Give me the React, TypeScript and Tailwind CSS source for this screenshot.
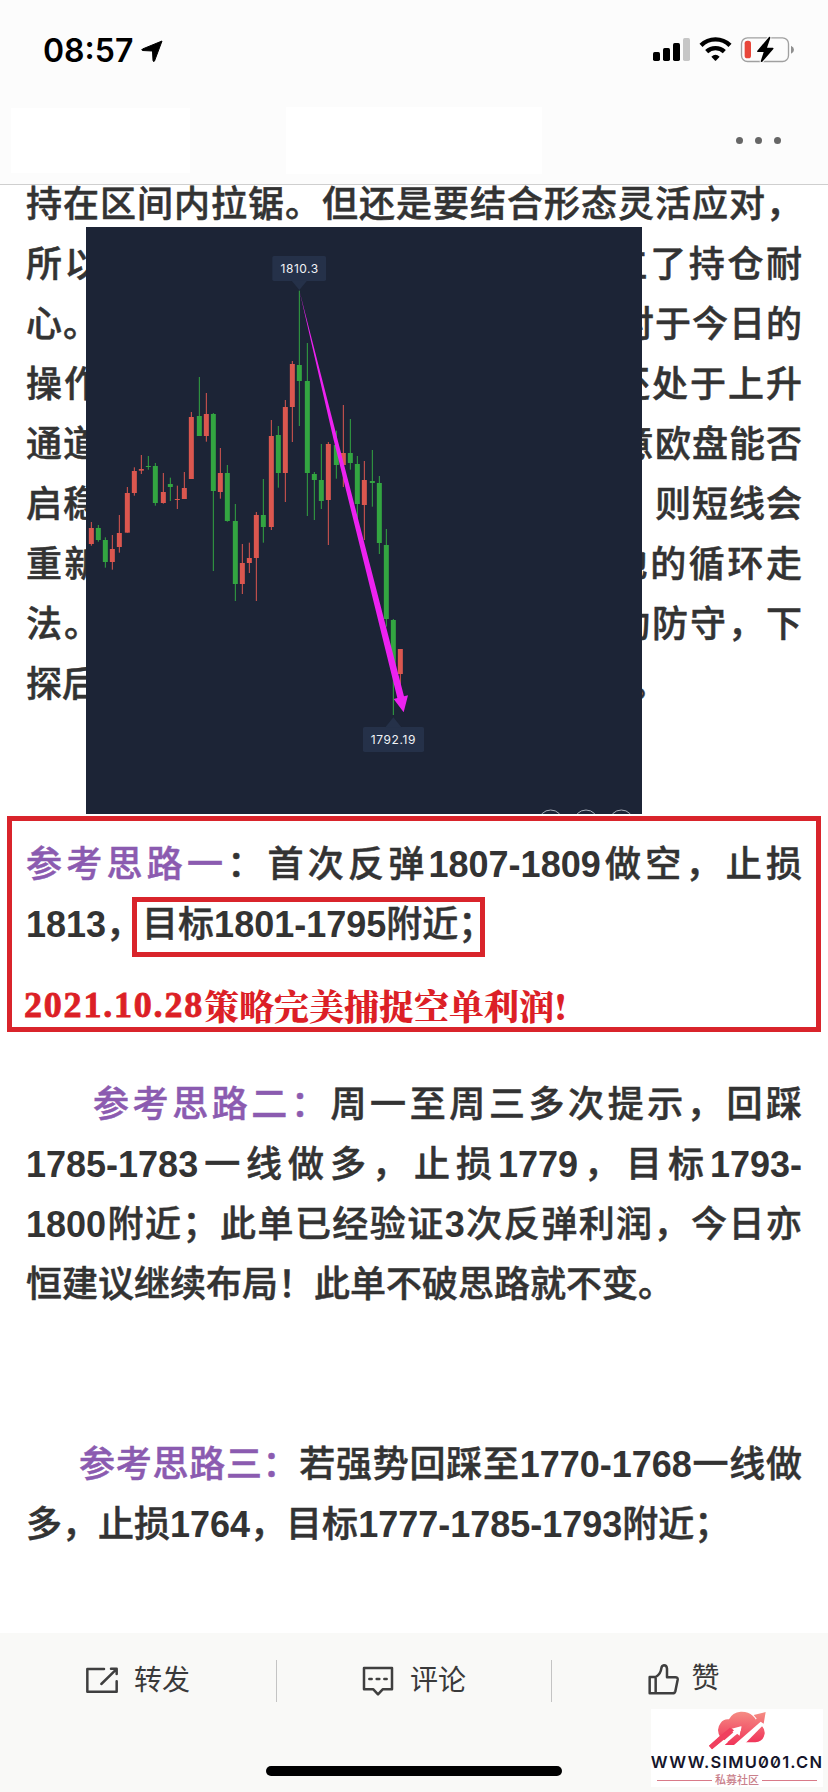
import React from 'react';

type Candle = [x: number, high: number, top: number, bottom: number, low: number, up: boolean];

const candles: Candle[] = [
  [34, 906, 924, 972, 977, true],
  [55, 915, 924, 960, 965, false],
  [76, 952, 960, 1026, 1043, false],
  [97, 945, 987, 1026, 1049, true],
  [118, 885, 939, 981, 998, true],
  [142, 801, 819, 938, 938, true],
  [163, 742, 753, 819, 827, true],
  [184, 705, 747, 752, 762, true],
  [205, 708, 738, 741, 749, false],
  [226, 729, 738, 849, 857, false],
  [250, 759, 816, 849, 851, true],
  [271, 773, 792, 801, 843, false],
  [292, 797, 837, 840, 867, true],
  [313, 756, 804, 837, 837, true],
  [334, 576, 591, 777, 777, true],
  [358, 471, 588, 648, 648, false],
  [379, 519, 582, 648, 665, true],
  [400, 579, 582, 813, 1053, false],
  [421, 684, 759, 816, 836, true],
  [442, 735, 759, 903, 905, false],
  [466, 852, 903, 1092, 1143, false],
  [487, 972, 1029, 1092, 1122, true],
  [508, 968, 1014, 1029, 1059, true],
  [529, 876, 885, 1014, 1143, true],
  [550, 777, 885, 921, 968, false],
  [574, 600, 648, 921, 930, true],
  [595, 618, 645, 759, 803, false],
  [616, 540, 561, 759, 846, true],
  [637, 423, 432, 561, 666, true],
  [658, 212, 435, 483, 618, false],
  [682, 369, 483, 759, 888, false],
  [703, 756, 762, 780, 900, false],
  [724, 672, 780, 843, 867, false],
  [745, 666, 672, 840, 975, true],
  [769, 632, 675, 735, 776, false],
  [790, 555, 699, 735, 801, true],
  [811, 597, 699, 729, 749, false],
  [832, 708, 732, 852, 900, false],
  [853, 723, 780, 855, 960, true],
  [877, 690, 783, 789, 860, false],
  [898, 768, 789, 969, 1002, false],
  [919, 927, 975, 1197, 1220, false],
  [940, 1197, 1200, 1350, 1485, false],
  [961, 1287, 1287, 1362, 1400, true],
];

const StatusIcons = () => (
  <svg className="h-[50px] w-[160px]" viewBox="0 0 480 150">
    <rect x="27" y="78" width="21" height="27" rx="5" fill="#000" />
    <rect x="57" y="66" width="21" height="39" rx="5" fill="#000" />
    <rect x="87" y="51" width="21" height="54" rx="5" fill="#000" />
    <rect x="117" y="36" width="21" height="69" rx="5" fill="#c6c6c6" />
    <g fill="none" stroke="#000" strokeWidth="13">
      <path d="M171 58 A62 62 0 0 1 258 58" />
      <path d="M188 77 A38 38 0 0 1 241 77" />
    </g>
    <path d="M202 92 Q214.500 81 227 92 L217 103 Q214.500 106 212 103 Z" fill="#000" />
    <rect x="292.500" y="35.500" width="141" height="71" rx="18" fill="none" stroke="#a0a0a0" strokeWidth="4" />
    <path d="M441 59 Q450 63 450 71 Q450 79 441 83 Z" fill="#8f8f8f" />
    <rect x="302" y="44" width="19" height="53" rx="8" fill="#e8463a" />
    <path
      d="M375 33 L340 74 Q338 78 342 78 L359 78 L350 106 Q351 110 355 107 L388 69 Q390 65 386 65 L369 65 L379 36 Q379 31 375 33 Z"
      fill="#000"
      stroke="#fcfcfc"
      strokeWidth="6"
      paintOrder="stroke"
    />
  </svg>
);

const PriceChart = () => (
  <svg className="block h-[587px] w-[556px] bg-[#1c2436]" viewBox="18 21 1668 1761">
    {candles.map(([x, high, top, bottom, low, up]) => (
      <g key={x} fill={up ? '#db574f' : '#33a541'}>
        <rect x={x - 1.5} y={high} width="3" height={low - high} />
        <rect x={x - 7.5} y={top} width="15" height={bottom - top} />
      </g>
    ))}
    <path d="M659 215 L773 660 L972 1429 L984 1426 L971 1477 L941 1437 L952 1434 L761 660 Z" fill="#ec22f0" />
    {/* high / low labels */}
    <g fill="#253149">
      <rect x="577" y="108" width="161" height="75" rx="5" />
      <path d="M635 182 H681 L658 210 Z" />
      <rect x="849" y="1521" width="183" height="75" rx="5" />
      <path d="M916 1522 H964 L940 1492 Z" />
    </g>
    <g fill="#f1f3f6" fontFamily="Inter, sans-serif" fontSize="36" fontWeight="400" textAnchor="middle">
      <text x="658" y="160" textLength="113">1810.3</text>
      <text x="939" y="1572" textLength="134">1792.19</text>
    </g>
    <g fill="none" stroke="#aab0ba" strokeWidth="3">
      <circle cx="1412" cy="1806" r="36" />
      <circle cx="1518" cy="1806" r="36" />
      <circle cx="1624" cy="1806" r="36" />
    </g>
  </svg>
);

const ForwardIcon = () => (
  <svg className="h-[30px] w-8" viewBox="0 0 96 90" fill="none" stroke="#3f3f3f" strokeWidth="7.500" strokeLinecap="round" strokeLinejoin="round">
    <path d="M54 9 H4 V77 H92 V46" />
    <path d="M46 54 L90 11 M75 8 H92 V24" />
  </svg>
);

const CommentIcon = () => (
  <svg className="h-[30px] w-8" viewBox="0 0 96 90" fill="none" stroke="#3f3f3f" strokeWidth="7.500" strokeLinecap="round" strokeLinejoin="round">
    <path d="M6 6 H90 V70 H62 L48 85 L34 70 H6 Z" />
    <path d="M22 39 H29 M44 39 H52 M67 39 H74" />
  </svg>
);

const LikeIcon = () => (
  <svg className="h-[31px] w-[31px]" viewBox="0 0 93 93" fill="none" stroke="#3f3f3f" strokeWidth="7.500" strokeLinecap="round" strokeLinejoin="round">
    <path d="M23 39 H5 V88 H74 Q80 88 82 82 L89 47 Q90 40 82 40 H57 V14 Q56 4 48 4 Q41 5 40 13 Q38 30 23 39 Z M23 39 V88" />
  </svg>
);

const SiteLogo = () => (
  <div className="flex h-[78px] w-[172px] flex-col items-center overflow-hidden bg-white">
    <svg className="mt-0.5 h-[39px] w-[58px]" viewBox="0 0 174 117">
      <defs>
        <linearGradient id="cloud" x1="0" y1="0" x2="0" y2="1">
          <stop offset="0" stopColor="#f58d84" />
          <stop offset="1" stopColor="#f0355a" />
        </linearGradient>
      </defs>
      {/* cloud */}
      <path
        d="M38 80 Q22 56 38 36 Q47 23 63 25 Q73 4 98 2 Q121 1 134 14 Q146 24 146 36 Q172 46 170 68 Q166 92 142 94 H60 Z"
        fill="url(#cloud)"
      />
      {/* cut-out arrows */}
      <path d="M36 122 L82 71 L72 60 L101 46 L94 78 L86 72 L50 106 Z" fill="#fff" />
      <path d="M78 108 L100 94 L166 36 L156 27 L120 60 L72 104 Z" fill="#fff" />
      {/* tail and growth arrow */}
      <path d="M3 104 L36 74 L60 56 L72 66 L12 115 Z" fill="#f0405f" />
      <path d="M50 102 L80 74 L146 23 L137 12 L173 3 L167 38 L158 32 L78 102 Z" fill="url(#cloud)" />
      <path d="M28 106 L80 61 L71 53 L99 46 L95 74 L87 68 L44 106 Z" fill="#fff" />
      <path d="M3 104 L66 50 L78 58 L12 115 Z" fill="#f0405f" />
      <path d="M96 96 L158 35 L165 43 L112 97 Z" fill="#fff" />
    </svg>
    <div className="mt-1 whitespace-nowrap font-['Inter'] text-[16.5px] font-semibold leading-[17px] tracking-[1.2px] text-[#15152a] [font-feature-settings:'zero']">
      WWW.SIMU001.CN
    </div>
    <div className="mt-[3px] flex w-40 items-center justify-between">
      <span className="h-px w-[55px] bg-[#d97a88]" />
      <span className="text-[11px] font-medium leading-3 text-[#c9808b]">私募社区</span>
      <span className="h-px w-[55px] bg-[#d97a88]" />
    </div>
  </div>
);

// Latin digits inside the article run bolder than the surrounding text
const Num = ({ children }: { children: React.ReactNode }) => (
  <span className="font-bold [-webkit-text-stroke:0]">{children}</span>
);

const Line = ({ children, className = '' }: { children: React.ReactNode; className?: string }) => (
  <p className={`h-[60px] whitespace-nowrap leading-[60px] ${className}`}>{children}</p>
);

const justified = 'text-justify [text-align-last:justify]';

const coveredLines = [
  { left: '所以', right: '立了持仓耐', tracking: 'tracking-[2.6px] -mr-[2.6px]' },
  { left: '心。', right: '对于今日的', tracking: 'tracking-[1px] -mr-px' },
  { left: '操作', right: '还处于上升', tracking: 'tracking-[2px] -mr-[2px]' },
  { left: '通道', right: '意欧盘能否', tracking: 'tracking-[1px] -mr-px' },
  { left: '启稳', right: '则短线会', tracking: 'tracking-[1px] -mr-px' },
  { left: '重新', right: '地的循环走', tracking: 'tracking-[2.6px] -mr-[2.6px]' },
  { left: '法。', right: '动防守，下', tracking: 'tracking-[2px] -mr-[2px]' },
];

const Article = () => (
  <div className="relative h-[1448px] overflow-hidden bg-white pl-[26px] pr-[26px] text-[36px] font-medium text-[#333]">
    <div className="-mt-[10px] [-webkit-text-stroke:0.5px]">
      <Line className={justified}>持在区间内拉锯。但还是要结合形态灵活应对，</Line>
      {coveredLines.map(({ left, right, tracking }) => (
        <div key={left} className="flex h-[60px] justify-between leading-[60px]">
          <span className={tracking}>{left}</span>
          <span className={tracking}>{right}</span>
        </div>
      ))}
      <div className="flex h-[60px] leading-[60px]">
        <span className="w-[606px]">探后</span>
        <span>。</span>
      </div>

      <div className="mt-[120px]">
        <Line className={justified}><span className="text-[#8b5bb0]">参考思路一</span>：首次反弹<Num>1807-1809</Num>做空，止损</Line>
        <Line><Num>1813</Num>，目标<Num>1801-1795</Num>附近；</Line>
      </div>

      <div className="mt-[120px]">
        <Line className={`pl-[67px] ${justified}`}><span className="text-[#8b5bb0]">参考思路二：</span>周一至周三多次提示，回踩</Line>
        <Line className={justified}><Num>1785-1783</Num>一线做多，止损<Num>1779</Num>，目标<Num>1793-</Num></Line>
        <Line className={justified}><Num>1800</Num>附近；此单已经验证<Num>3</Num>次反弹利润，今日亦</Line>
        <Line>恒建议继续布局！此单不破思路就不变。</Line>
      </div>

      <div className="mt-[120px]">
        <Line className={`pl-[53px] ${justified}`}><span className="text-[#8b5bb0]">参考思路三：</span>若强势回踩至<Num>1770-1768</Num>一线做</Line>
        <Line>多，止损<Num>1764</Num>，目标<Num>1777-1785-1793</Num>附近；</Line>
      </div>
    </div>

    {/* Chart pasted over the text */}
    <div className="absolute left-[86px] top-[42px]">
      <PriceChart />
    </div>

    {/* Red markup */}
    <div className="absolute left-[7px] top-[631px] h-[216px] w-[814px] border-[5px] border-[#d9242b]" />
    <div className="absolute left-[132px] top-[712px] h-[60px] w-[353px] border-[5px] border-[#d9242b]" />
    <div className="absolute left-[24px] top-[796px] flex items-center whitespace-nowrap font-bold leading-[48px] text-[#dc1f26]">
      <span className="font-['Liberation_Serif',serif] text-[36px] tracking-[1.8px] [-webkit-text-stroke:0.8px]">2021.10.28</span>
      <span className="font-['Noto_Serif_CJK_SC','Noto_Sans_CJK_SC',sans-serif] text-[35px] font-black">策略完美捕捉空单利润!</span>
    </div>
  </div>
);

const App: React.FC = () => {
  return (
    <div className="h-[1792px] w-[828px] overflow-hidden bg-white font-['Liberation_Sans','Noto_Sans_CJK_SC',sans-serif] [text-spacing-trim:space-all]" lang="zh-CN">
      {/* Header */}
      <header className="h-[185px] border-b border-[#cfcfcf] bg-[#fcfcfc]">
        <div className="flex h-[101px] items-center justify-between pl-[43px] pr-6">
          <div className="flex items-center gap-[8px]">
            <span className="font-['Inter'] text-[32px] font-semibold text-black">08:57</span>
            <svg className="h-[22px] w-[22px]" viewBox="0 0 22 22">
              <path d="M21 1 L13.500 21 Q12.500 22.500 12 20.500 L11.500 11 L1.500 10.500 Q0 10 1.500 9 Z" fill="#000" stroke="#000" strokeWidth="1" strokeLinejoin="round" />
            </svg>
          </div>
          <StatusIcons />
        </div>
        <div className="flex h-[78px] items-center pl-[11px] pr-[47px]">
          <div className="h-[65px] w-[179px] bg-white" />
          <div className="ml-24 h-[67px] w-64 bg-white" />
          <div className="ml-auto flex gap-3">
            <span className="h-[7px] w-[7px] rounded-full bg-[#666]" />
            <span className="h-[7px] w-[7px] rounded-full bg-[#666]" />
            <span className="h-[7px] w-[7px] rounded-full bg-[#666]" />
          </div>
        </div>
      </header>

      <Article />

      {/* Bottom bar */}
      <footer className="relative h-[159px] bg-[#f9f9f7] text-[28px] text-[#3a3a3a]">
        <div className="grid h-[94px] grid-cols-3 items-center pt-0.5">
          <div className="flex items-center justify-center gap-4">
            <ForwardIcon />
            <span>转发</span>
          </div>
          <div className="flex h-[42px] items-center justify-center gap-4 border-x border-[#c4c4c4]">
            <CommentIcon />
            <span>评论</span>
          </div>
          <div className="flex items-center justify-center gap-3 pb-1 pr-3">
            <LikeIcon />
            <span>赞</span>
          </div>
        </div>
        <div className="mx-auto mt-[39px] h-[10px] w-[296px] rounded-full bg-black" />
        <div className="absolute left-[651px] top-[76px]">
          <SiteLogo />
        </div>
      </footer>
    </div>
  );
};

export default App;
